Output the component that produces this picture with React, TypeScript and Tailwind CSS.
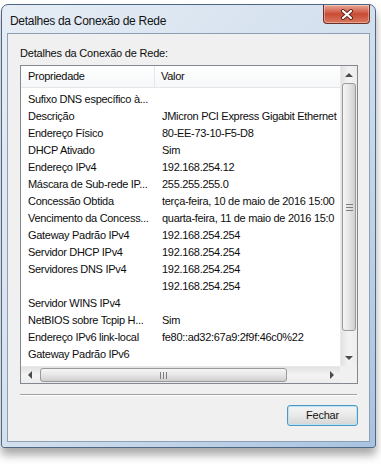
const rows: [string, string][] = [
  ['Sufixo DNS específico à...', ''],
  ['Descrição', 'JMicron PCI Express Gigabit Ethernet'],
  ['Endereço Físico', '80-EE-73-10-F5-D8'],
  ['DHCP Ativado', 'Sim'],
  ['Endereço IPv4', '192.168.254.12'],
  ['Máscara de Sub-rede IP...', '255.255.255.0'],
  ['Concessão Obtida', 'terça-feira, 10 de maio de 2016 15:00'],
  ['Vencimento da Concess...', 'quarta-feira, 11 de maio de 2016 15:0'],
  ['Gateway Padrão IPv4', '192.168.254.254'],
  ['Servidor DHCP IPv4', '192.168.254.254'],
  ['Servidores DNS IPv4', '192.168.254.254'],
  ['', '192.168.254.254'],
  ['Servidor WINS IPv4', ''],
  ['NetBIOS sobre Tcpip H...', 'Sim'],
  ['Endereço IPv6 link-local', 'fe80::ad32:67a9:2f9f:46c0%22'],
  ['Gateway Padrão IPv6', ''],
  ['Servidor DNS IPv6', ''],
];

const Arrow = ({ dir }: { dir: 'up' | 'down' | 'left' | 'right' }) => {
  const pts = {
    up: '0,5 4,1 8,5',
    down: '0,1 4,5 8,1',
    left: '5,0 1,4 5,8',
    right: '1,0 5,4 1,8',
  }[dir];
  const vertical = dir === 'up' || dir === 'down';
  return (
    <svg width={vertical ? 8 : 6} height={vertical ? 6 : 8} viewBox={vertical ? '0 0 8 6' : '0 0 6 8'}>
      <polygon points={pts} fill="#4a4a4a" />
    </svg>
  );
};

const VScroll = () => (
  <div className="flex flex-col bg-gradient-to-r from-[#e2e2e2] via-[#f3f3f3] to-[#ececec] border-l border-[#eaeaea]">
    <div className="h-[17px] flex items-center justify-center">
      <Arrow dir="up" />
    </div>
    <div className="mx-[1px] h-[248px] rounded-[3px] border border-[#9a9a9a] bg-gradient-to-r from-[#f5f5f5] via-[#e6e6e6] to-[#cfcfcf] flex items-center justify-center">
      <div className="flex flex-col gap-[2px]">
        <div className="w-[7px] h-px bg-[#7d7d7d]" />
        <div className="w-[7px] h-px bg-[#7d7d7d]" />
        <div className="w-[7px] h-px bg-[#7d7d7d]" />
      </div>
    </div>
    <div className="flex-1" />
    <div className="h-[17px] flex items-center justify-center">
      <Arrow dir="down" />
    </div>
  </div>
);

const HScroll = () => (
  <div className="flex items-stretch h-[17px] bg-gradient-to-b from-[#e2e2e2] via-[#f3f3f3] to-[#ececec] border-t border-[#eaeaea]">
    <div className="w-[17px] flex items-center justify-center">
      <Arrow dir="left" />
    </div>
    <div className="ml-[2px] my-[1px] w-[247px] rounded-[3px] border border-[#9a9a9a] bg-gradient-to-b from-[#f5f5f5] via-[#e6e6e6] to-[#cfcfcf] flex items-center justify-center">
      <div className="flex gap-[2px]">
        <div className="w-px h-[7px] bg-[#7d7d7d]" />
        <div className="w-px h-[7px] bg-[#7d7d7d]" />
        <div className="w-px h-[7px] bg-[#7d7d7d]" />
      </div>
    </div>
    <div className="flex-1" />
    <div className="w-[17px] flex items-center justify-center">
      <Arrow dir="right" />
    </div>
  </div>
);

export default function App() {
  return (
    <div
      className="w-[381px] h-[467px] bg-white pt-[4px] pl-[1px] text-[#0d0d0d]"
      style={{ fontFamily: '"Liberation Sans", Arial, sans-serif' }}
    >
      <div className="w-[375px] rounded-t-[7px] rounded-b-[3px] border border-[#4f6782] bg-gradient-to-br from-[#e6edf5] via-[#d3e0ee] to-[#a8c3e0] shadow-[0_7px_10px_rgba(0,0,0,0.35)]">
        {/* title bar */}
        <div className="h-[28px] flex items-start justify-between">
          <div className="pl-[8px] pt-[9px] text-[12px] leading-[14px] tracking-[-0.3px] text-[#141414]">
            Detalhes da Conexão de Rede
          </div>
          <div className="mr-[5px] w-[47px] h-[19px] rounded-b-[4px] border border-t-0 border-[#6d3026] bg-gradient-to-b from-[#e9a899] via-[#c84a34] to-[#d9785f] flex items-center justify-center shadow-[inset_0_0_0_1px_rgba(255,255,255,0.35)]">
            <svg width="14" height="11" viewBox="0 0 14 11">
              <path d="M3 2 L11 9 M11 2 L3 9" stroke="#5a2018" strokeWidth="4" strokeLinecap="round" />
              <path d="M3 2 L11 9 M11 2 L3 9" stroke="#ffffff" strokeWidth="2.2" strokeLinecap="round" />
            </svg>
          </div>
        </div>

        {/* client area */}
        <div className="mx-[5px] mb-[5px] h-[409px] border border-[#8d9fb5] bg-[#f0f0f0] flex flex-col">
          <div className="mt-[12px] ml-[12px] text-[11px] leading-[15px] tracking-[-0.2px]">
            Detalhes da Conexão de Rede:
          </div>

          {/* list view */}
          <div className="mt-[4px] ml-[12px] w-[338px] h-[319px] border border-[#828790] bg-white grid grid-cols-[1fr_17px] grid-rows-[1fr_17px]">
            <div className="overflow-hidden">
              <div className="h-[22px] flex border-b border-[#e3e6ea] bg-gradient-to-b from-white to-[#f6f7f9] text-[11px] tracking-[-0.3px]">
                <div className="w-[134px] pl-[7px] flex items-center border-r border-[#e3e6ea]">Propriedade</div>
                <div className="pl-[6px] flex items-center">Valor</div>
              </div>
              <div className="pt-[3px]">
                {rows.map(([k, v], i) => (
                  <div key={i} className="h-[17px] flex items-center text-[11px] tracking-[-0.3px] whitespace-nowrap">
                    <div className="w-[134px] shrink-0 pl-[7px] overflow-hidden">{k}</div>
                    <div className="pl-[7px]">{v}</div>
                  </div>
                ))}
              </div>
            </div>
            <VScroll />
            <HScroll />
            <div className="bg-[#f0f0f0]" />
          </div>

          <div className="mt-[10px] ml-[12px] w-[337px] h-px bg-[#a0a0a0]" />
          <div className="ml-[12px] w-[337px] h-px bg-white" />

          <div className="mt-[9px] flex justify-end pr-[11px]">
            <button className="w-[71px] h-[21px] rounded-[3px] border border-[#4f97c2] bg-gradient-to-b from-[#f4f4f4] via-[#e9e9e9] to-[#d5d5d5] shadow-[inset_0_0_0_1px_#b9e4f8] text-[11px] tracking-[-0.2px] text-[#141414]">
              Fechar
            </button>
          </div>
        </div>
      </div>
    </div>
  );
}
